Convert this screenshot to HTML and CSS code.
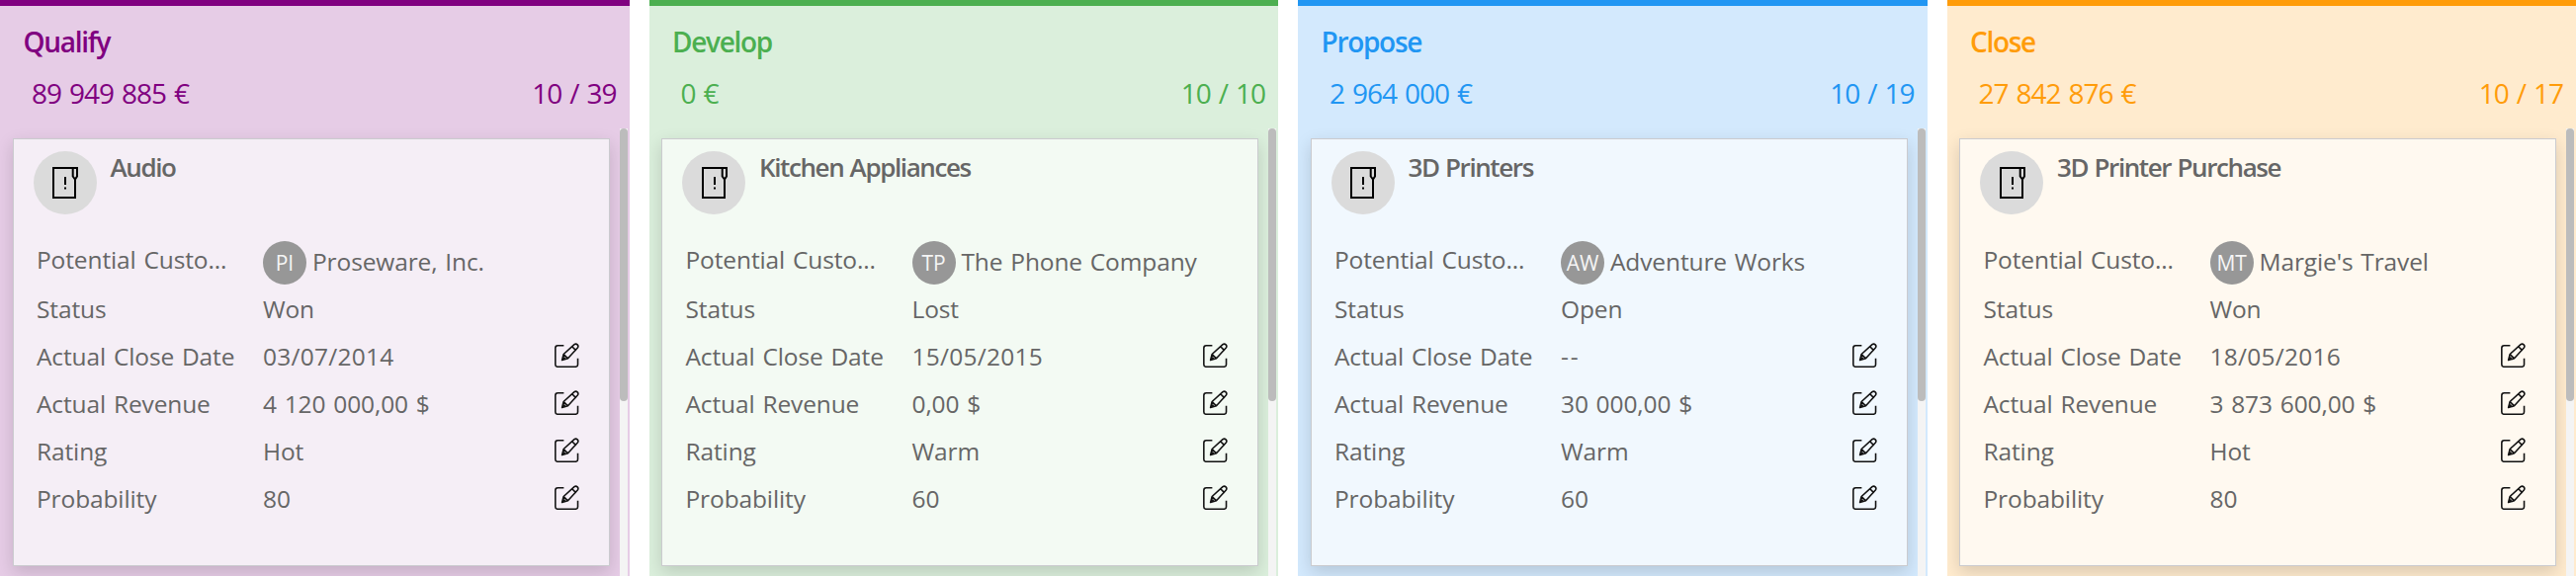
FILE: index.html
```
<!DOCTYPE html>
<html lang="en">
<head>
<meta charset="utf-8">
<title>Opportunities</title>
<link rel="stylesheet" href="styles.css">
</head>
<body>
<svg class="sprite" width="0" height="0" aria-hidden="true">
  <symbol id="edit" viewBox="0 0 24 24">
    <path d="M9 2.7H3.2Q.8 2.7.8 5v16q0 2.3 2.4 2.3h17q2.4 0 2.4-2.3v-6"/>
    <path d="M7.3 16.8 8.8 11 19.2 1.6q1.6-1.2 3 .2t.2 3L13 15.2zM8.8 11l4.2 4.2M17 3.600l4 4M7.300 16.800l2.800-2.800"/>
  </symbol>
  <symbol id="note" viewBox="0 0 26 32">
    <path d="M21 1H1v30h22V12M20.700 1H25v8.500L23 12.500 20.700 9.500z"/>
    <path class="mark" d="M13 10v8M13 20.500v2"/>
  </symbol>
</svg>
<main class="board">
  <section class="column qualify">
    <header><h2>Qualify</h2><div class="totals"><span>89 949 885 €</span><span>10 / 39</span></div></header>
    <div class="list">
      <article class="card">
        <div class="card-head"><span class="badge"><svg><use href="#note"/></svg></span><h3>Audio</h3></div>
        <dl>
          <div class="row lookup"><dt>Potential Custo...</dt><dd><span class="avatar">PI</span>Proseware, Inc.</dd></div>
          <div class="row"><dt>Status</dt><dd>Won</dd></div>
          <div class="row"><dt>Actual Close Date</dt><dd class="date">03/07/2014</dd><svg class="edit"><use href="#edit"/></svg></div>
          <div class="row"><dt>Actual Revenue</dt><dd>4 120 000,00 $</dd><svg class="edit"><use href="#edit"/></svg></div>
          <div class="row"><dt>Rating</dt><dd>Hot</dd><svg class="edit"><use href="#edit"/></svg></div>
          <div class="row"><dt>Probability</dt><dd>80</dd><svg class="edit"><use href="#edit"/></svg></div>
        </dl>
      </article>
      <div class="track"><div class="thumb"></div></div>
    </div>
  </section>
  <section class="column develop">
    <header><h2>Develop</h2><div class="totals"><span>0 €</span><span>10 / 10</span></div></header>
    <div class="list">
      <article class="card">
        <div class="card-head"><span class="badge"><svg><use href="#note"/></svg></span><h3>Kitchen Appliances</h3></div>
        <dl>
          <div class="row lookup"><dt>Potential Custo...</dt><dd><span class="avatar">TP</span>The Phone Company</dd></div>
          <div class="row"><dt>Status</dt><dd>Lost</dd></div>
          <div class="row"><dt>Actual Close Date</dt><dd class="date">15/05/2015</dd><svg class="edit"><use href="#edit"/></svg></div>
          <div class="row"><dt>Actual Revenue</dt><dd>0,00 $</dd><svg class="edit"><use href="#edit"/></svg></div>
          <div class="row"><dt>Rating</dt><dd>Warm</dd><svg class="edit"><use href="#edit"/></svg></div>
          <div class="row"><dt>Probability</dt><dd>60</dd><svg class="edit"><use href="#edit"/></svg></div>
        </dl>
      </article>
      <div class="track"><div class="thumb"></div></div>
    </div>
  </section>
  <section class="column propose">
    <header><h2>Propose</h2><div class="totals"><span>2 964 000 €</span><span>10 / 19</span></div></header>
    <div class="list">
      <article class="card">
        <div class="card-head"><span class="badge"><svg><use href="#note"/></svg></span><h3>3D Printers</h3></div>
        <dl>
          <div class="row lookup"><dt>Potential Custo...</dt><dd><span class="avatar">AW</span>Adventure Works</dd></div>
          <div class="row"><dt>Status</dt><dd>Open</dd></div>
          <div class="row"><dt>Actual Close Date</dt><dd class="empty">--</dd><svg class="edit"><use href="#edit"/></svg></div>
          <div class="row"><dt>Actual Revenue</dt><dd>30 000,00 $</dd><svg class="edit"><use href="#edit"/></svg></div>
          <div class="row"><dt>Rating</dt><dd>Warm</dd><svg class="edit"><use href="#edit"/></svg></div>
          <div class="row"><dt>Probability</dt><dd>60</dd><svg class="edit"><use href="#edit"/></svg></div>
        </dl>
      </article>
      <div class="track"><div class="thumb"></div></div>
    </div>
  </section>
  <section class="column close">
    <header><h2>Close</h2><div class="totals"><span>27 842 876 €</span><span>10 / 17</span></div></header>
    <div class="list">
      <article class="card">
        <div class="card-head"><span class="badge"><svg><use href="#note"/></svg></span><h3>3D Printer Purchase</h3></div>
        <dl>
          <div class="row lookup"><dt>Potential Custo...</dt><dd><span class="avatar">MT</span>Margie's Travel</dd></div>
          <div class="row"><dt>Status</dt><dd>Won</dd></div>
          <div class="row"><dt>Actual Close Date</dt><dd class="date">18/05/2016</dd><svg class="edit"><use href="#edit"/></svg></div>
          <div class="row"><dt>Actual Revenue</dt><dd>3 873 600,00 $</dd><svg class="edit"><use href="#edit"/></svg></div>
          <div class="row"><dt>Rating</dt><dd>Hot</dd><svg class="edit"><use href="#edit"/></svg></div>
          <div class="row"><dt>Probability</dt><dd>80</dd><svg class="edit"><use href="#edit"/></svg></div>
        </dl>
      </article>
      <div class="track"><div class="thumb"></div></div>
    </div>
  </section>
</main>
</body>
</html>
```
FILE: styles.css
```
* { box-sizing: border-box; margin: 0; padding: 0; }
body { background: #fff; color: #666; font-family: "Segoe UI", "Open Sans", sans-serif; overflow: hidden; }
.sprite { display: block; }
.board { display: grid; grid-template-columns: repeat(4, 1fr); gap: 20px; height: 583px; }
.column { display: flex; flex-direction: column; min-width: 0; height: 583px; overflow: hidden; border-top: 6px solid var(--accent); background: var(--tint); }
.qualify { --accent: #800080; --tint: #e6cce6; --card: #f5eef6; }
.develop { --accent: #4caf50; --tint: #dbefdc; --card: #f3faf3; }
.propose { --accent: #2196f3; --tint: #d3e9fd; --card: #f1f8fe; }
.close { --accent: #ff9c0a; --tint: #ffebce; --card: #fff9f0; }

header { display: flex; flex-direction: column; gap: 12px; height: 124px; padding: 16px 13px 0 23.5px; color: var(--accent); }
h2 { font-size: 28px; line-height: 40px; font-weight: 600; letter-spacing: -1.3px; white-space: nowrap; }
.totals { display: flex; justify-content: space-between; padding-left: 8.5px; font-size: 28px; line-height: 40px; letter-spacing: -1.05px; word-spacing: 1.9px; white-space: nowrap; }

.list { display: flex; justify-content: space-between; flex: 1; padding-right: 2px; padding-left: 12.5px; }
.card { width: 604px; height: 433px; margin-top: 10px; border: 1px solid #cbcbcf; background: var(--card); box-shadow: 0 6px 16px rgba(0, 0, 0, .15); }
.card-head { display: flex; gap: 14px; height: 100px; padding: 12px 0 0 20px; }
.badge { display: flex; align-items: center; justify-content: center; width: 64px; height: 64px; border-radius: 50%; background: #dbdbdb; padding-left: 1px; }
.badge svg { width: 26px; height: 32px; fill: none; stroke: #000; stroke-width: 2; }
.mark { stroke-width: 2; }
h3 { font-size: 26px; line-height: 36px; font-weight: 600; letter-spacing: -1.4px; word-spacing: 1px; white-space: nowrap; margin-top: -2px; }

.row { display: grid; grid-template-columns: 229px 294.500px 25px; align-items: center; height: 48px; padding-left: 23.5px; font-size: 24.5px; line-height: 48px; letter-spacing: -0.12px; word-spacing: 1.6px; white-space: nowrap; }
.lookup dt { margin-top: -4px; }
dd { display: flex; align-items: center; }
.date { letter-spacing: 0.25px; }
.empty { letter-spacing: 1.8px; }
.avatar { display: flex; align-items: center; justify-content: center; width: 44px; height: 44px; margin: 2px 6px 0 0; border-radius: 50%; background: #979797; color: #f5f5f5; font-size: 21px; line-height: 44px; }
.edit { width: 25px; height: 25px; fill: none; stroke: #111; stroke-width: 1.5; stroke-linejoin: round; margin-top: -3px; }

.track { width: 8px; background: #f4f4f4; }
.thumb { height: 276px; border-radius: 4px; background: #bcbcbc; }
```
